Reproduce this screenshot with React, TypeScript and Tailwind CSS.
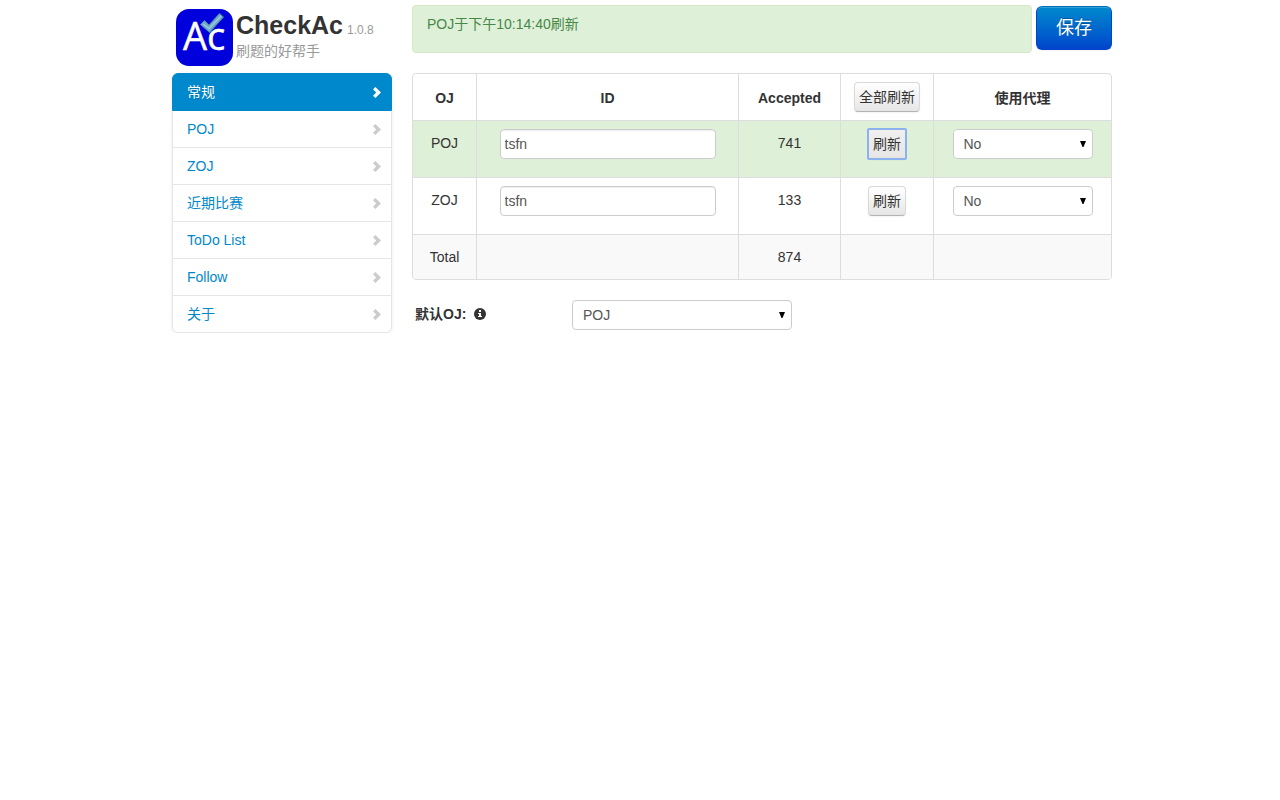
import { useState } from "react";
import clsx from "clsx";

const NAV_ITEMS = ["常规", "POJ", "ZOJ", "近期比赛", "ToDo List", "Follow", "关于"];

const ACCOUNTS = [
  { oj: "POJ", id: "tsfn", accepted: 741, updated: true },
  { oj: "ZOJ", id: "tsfn", accepted: 133, updated: false },
];

function Logo() {
  return (
    <svg className="size-[57px] shrink-0 overflow-visible" viewBox="0 0 57 57" aria-hidden="true">
      <rect width="57" height="57" rx="13" fill="#0000dc" />
      <g fontFamily="'Open Sans', sans-serif" fill="#fff" stroke="#fff" strokeWidth="0.5">
        <text x="7" y="41" fontSize="38">
          A
        </text>
        <text x="31" y="41" fontSize="38">
          c
        </text>
      </g>
      <path
        d="M24.5 15.5 28.5 11.5 33 16 43.5 4.5 47.5 8 33.5 23.5Z"
        fill="#6fa9c9"
        stroke="#4a86ad"
        strokeWidth="1"
      />
      <path d="M27 15 33 19.5 45 7" fill="none" stroke="#9cc8dc" strokeWidth="1.5" />
    </svg>
  );
}

function Chevron() {
  return (
    <svg className="h-[11px] w-2" viewBox="0 0 8 11" fill="currentColor" aria-hidden="true">
      <path d="M2.4 0 8 5.5 2.4 11 0 8.7 3.2 5.5 0 2.3Z" />
    </svg>
  );
}

function Info() {
  return (
    <svg className="size-3" viewBox="0 0 12 12" aria-hidden="true">
      <circle cx="6" cy="6" r="6" fill="#333" />
      <path d="M5 2h2v2H5zM4 5h3v3h1v1H4V8h1V6H4z" fill="#fff" />
    </svg>
  );
}

type SelectProps = {
  id?: string;
  label?: string;
  options: string[];
  className: string;
};

function Select({ id, label, options, className }: SelectProps) {
  return (
    <div className={clsx("relative", className)}>
      <select
        id={id}
        aria-label={label}
        className="block h-[30px] w-full appearance-none rounded border border-[#ccc] bg-white px-[10px] text-sm leading-5 text-[#555]"
      >
        {options.map((o) => (
          <option key={o}>{o}</option>
        ))}
      </select>
      <svg
        className="pointer-events-none absolute top-3 right-[7px] h-[6px] w-[6px]"
        viewBox="0 0 6 6"
        aria-hidden="true"
      >
        <path d="M0 0h6L3.5 6h-1z" fill="#000" />
      </svg>
    </div>
  );
}

function RefreshButton({ children, active = false }: { children: string; active?: boolean }) {
  return (
    <button
      type="button"
      className={clsx(
        "h-[30px] border border-[#d9d9d9] border-b-[#b3b3b3] px-1 text-sm leading-5 whitespace-nowrap text-[#333] shadow-[0_1px_2px_rgba(0,0,0,0.05)]",
        active
          ? "rounded-[1px] bg-linear-to-b from-[#f0f0f0] to-[#e6e6e6] outline-2 -outline-offset-1 outline-[#8cb2ee]"
          : "rounded bg-linear-to-b from-white to-[#e6e6e6]"
      )}
    >
      {children}
    </button>
  );
}

const cell = "border-t border-l border-[#ddd] px-2 align-top";

export default function App() {
  const [active, setActive] = useState("常规");
  const total = ACCOUNTS.reduce((sum, a) => sum + a.accepted, 0);

  return (
    <div className="pl-1 font-['Liberation_Sans','Noto_Sans_CJK_SC',sans-serif] text-sm leading-5 text-[#333]">
      <div className="mx-auto flex max-w-[940px] items-start gap-5">
        <aside className="w-[220px] shrink-0">
          <div className="flex h-[73px] gap-[3px] pt-[9px] pl-1">
            <Logo />
            <div>
              <h1 className="flex items-baseline gap-1 text-[25px] leading-8 font-bold">
                CheckAc
                <small className="text-xs font-normal text-[#999]">1.0.8</small>
              </h1>
              <p className="text-[#999]">刷题的好帮手</p>
            </div>
          </div>

          <nav className="rounded-md shadow-[0_1px_4px_rgba(0,0,0,0.065)]">
            <ul>
              {NAV_ITEMS.map((item) => (
                <li key={item} className="group -mb-px last:mb-0">
                  <a
                    href="#"
                    onClick={() => setActive(item)}
                    className={clsx(
                      "flex items-center justify-between border px-[14px] py-2 group-first:rounded-t-md group-last:rounded-b-md",
                      item === active
                        ? "relative border-[#08c] bg-[#08c] text-white [text-shadow:0_1px_0_rgba(0,0,0,0.15)]"
                        : "border-[#e5e5e5] bg-white text-[#08c]"
                    )}
                  >
                    {item}
                    <span className={clsx("-mr-1", item === active ? "text-white" : "text-[#ccc]")}>
                      <Chevron />
                    </span>
                  </a>
                </li>
              ))}
            </ul>
          </nav>
        </aside>

        <main className="min-w-0 flex-1 pt-[5px]">
          <div className="mb-5 flex gap-1">
            <div
              role="status"
              className="h-12 flex-1 rounded border border-[#d6e9c6] bg-[#dff0d8] px-[14px] py-2 text-[#468847]"
            >
              POJ于下午10:14:40刷新
            </div>
            <button
              type="button"
              className="mt-px h-11 w-[76px] rounded-md border border-[#04c] border-t-[#0070b8] bg-linear-to-b from-[#08c] to-[#04c] text-lg leading-5 text-white shadow-[inset_0_1px_0_rgba(255,255,255,0.2),0_1px_2px_rgba(0,0,0,0.05)] [text-shadow:0_-1px_0_rgba(0,0,0,0.25)]"
            >
              保存
            </button>
          </div>

          <div className="overflow-hidden rounded border border-[#ddd]">
            <table className="-mt-px -ml-px w-[calc(100%+1px)] table-fixed border-separate border-spacing-0 text-center">
              <colgroup>
                <col className="w-16" />
                <col />
                <col className="w-[102px]" />
                <col className="w-[93px]" />
                <col className="w-[178px]" />
              </colgroup>
              <thead>
                <tr>
                  <th className={clsx(cell, "pt-[14px] pb-3")}>OJ</th>
                  <th className={clsx(cell, "pt-[14px] pb-3")}>ID</th>
                  <th className={clsx(cell, "pt-[14px] pb-3")}>Accepted</th>
                  <th className={clsx(cell, "py-2 font-normal")}>
                    <div className="flex justify-center">
                      <RefreshButton>全部刷新</RefreshButton>
                    </div>
                  </th>
                  <th className={clsx(cell, "pt-[14px] pb-3")}>使用代理</th>
                </tr>
              </thead>
              <tbody>
                {ACCOUNTS.map((a) => (
                  <tr key={a.oj} className={clsx(a.updated && "bg-[#dff0d8]")}>
                    <td className={clsx(cell, "py-3")}>{a.oj}</td>
                    <td className={clsx(cell, "pt-2 pb-[18px]")}>
                      <input
                        type="text"
                        aria-label={`${a.oj} ID`}
                        defaultValue={a.id}
                        className="mx-auto block h-[30px] w-[216px] rounded border border-[#ccc] bg-white px-1 text-sm leading-5 text-[#555] shadow-[inset_0_1px_1px_rgba(0,0,0,0.075)]"
                      />
                    </td>
                    <td className={clsx(cell, "py-3")}>{a.accepted}</td>
                    <td className={clsx(cell, "py-2")}>
                      <div className="flex justify-center">
                        <RefreshButton active={a.updated}>刷新</RefreshButton>
                      </div>
                    </td>
                    <td className={clsx(cell, "py-2")}>
                      <Select
                        label={`${a.oj} 使用代理`}
                        options={["No", "Yes"]}
                        className="mx-auto w-[140px]"
                      />
                    </td>
                  </tr>
                ))}
                <tr className="bg-[#f9f9f9]">
                  <td className={clsx(cell, "py-3")}>Total</td>
                  <td className={cell} />
                  <td className={clsx(cell, "py-3")}>{total}</td>
                  <td className={cell} />
                  <td className={cell} />
                </tr>
              </tbody>
            </table>
          </div>

          <div className="mt-5 flex">
            <label
              htmlFor="default-oj"
              className="flex h-7 w-40 items-center gap-2 pl-[3px] font-bold"
            >
              默认OJ: <Info />
            </label>
            <Select id="default-oj" options={["POJ", "ZOJ"]} className="w-[220px]" />
          </div>
        </main>
      </div>
    </div>
  );
}
